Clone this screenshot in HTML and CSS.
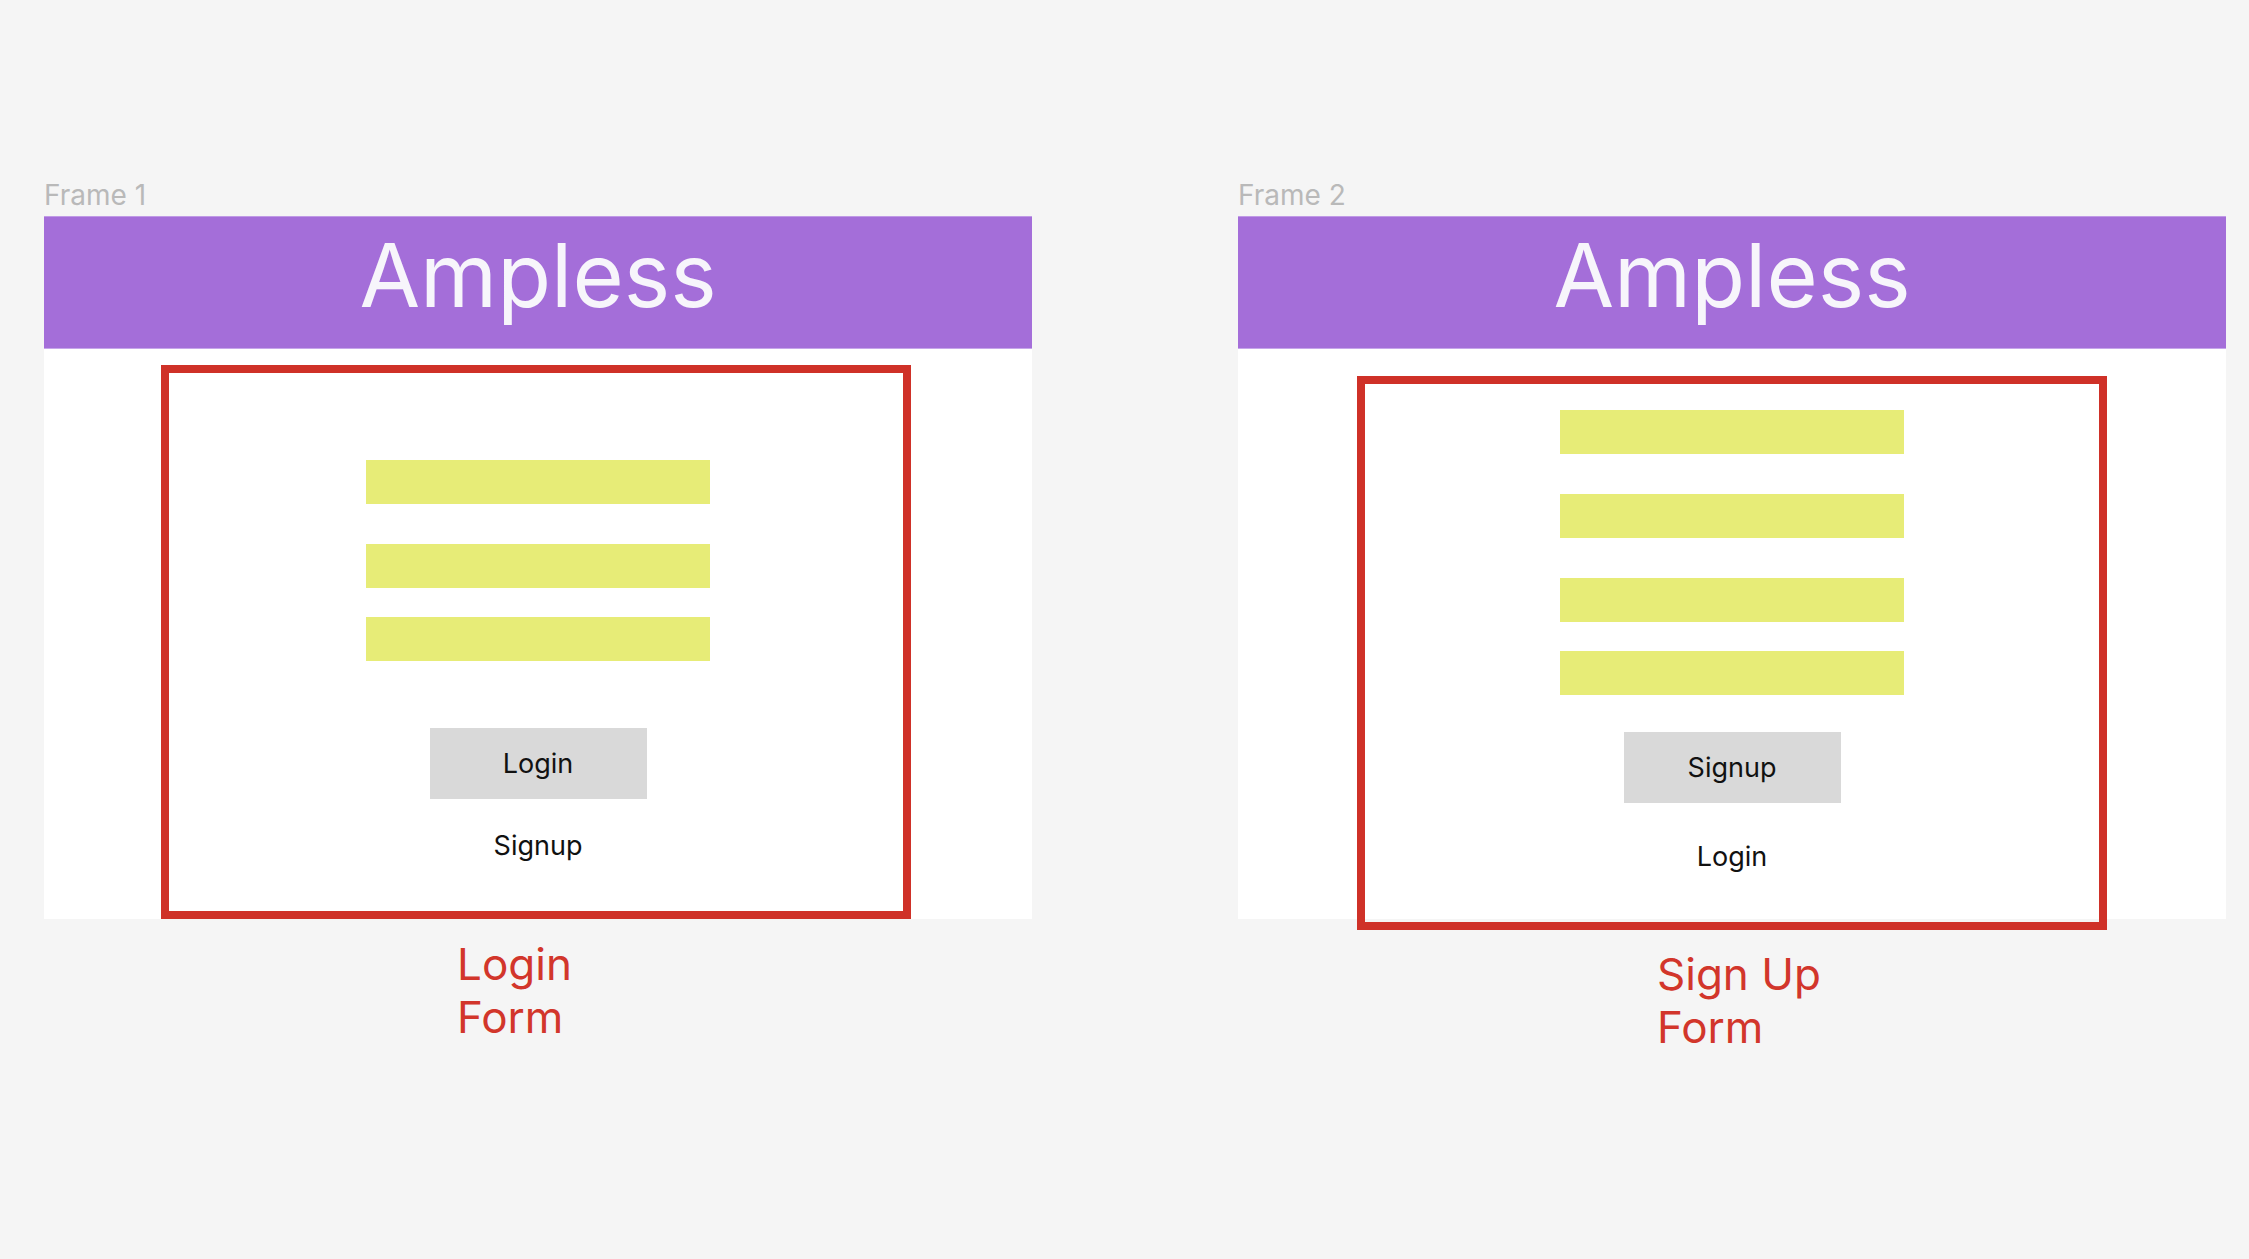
FILE: index.html
```html
<!DOCTYPE html>
<html lang="en">
<head>
<meta charset="utf-8">
<title>Ampless wireframes</title>
<link rel="stylesheet" href="styles.css">
</head>
<body>
<main class="canvas">
  <section class="board board-login">
    <div class="frame-name">Frame 1</div>
    <div class="frame">
      <header class="frame-header">Ampless</header>
      <div class="frame-body">
        <div class="callout callout-login">
          <div class="field"></div>
          <div class="field field-gap"></div>
          <div class="field field-gap-sm"></div>
          <div class="btn btn-login">Login</div>
          <div class="link link-login">Signup</div>
        </div>
      </div>
    </div>
    <div class="note note-login">Login<br>Form</div>
  </section>

  <section class="board board-signup">
    <div class="frame-name">Frame 2</div>
    <div class="frame">
      <header class="frame-header">Ampless</header>
      <div class="frame-body">
        <div class="callout callout-signup">
          <div class="field"></div>
          <div class="field field-gap"></div>
          <div class="field field-gap"></div>
          <div class="field field-gap-sm"></div>
          <div class="btn btn-signup">Signup</div>
          <div class="link link-signup">Login</div>
        </div>
      </div>
    </div>
    <div class="note note-signup">Sign Up<br>Form</div>
  </section>
</main>
</body>
</html>
```

FILE: styles.css
```css
html, body {
  margin: 0;
  padding: 0;
  background: #f5f5f5;
}

body {
  width: 2249px;
  height: 1259px;
  overflow: hidden;
  font-family: Inter, "Noto Sans", "Liberation Sans", sans-serif;
}

.canvas {
  display: flex;
  align-items: flex-start;
  gap: 206px;
  padding: 178px 0 0 44px;
}

.board {
  display: flex;
  flex-direction: column;
  width: 988px;
}

.frame-name {
  font-size: 28px;
  line-height: 34px;
  color: #b9b9b9;
  margin-bottom: 4px;
}

.frame {
  display: flex;
  flex-direction: column;
}

.frame-header {
  box-sizing: border-box;
  height: 133px;
  padding-top: 6px;
  background: #a46ed9;
  border-top: 1px solid #c09ae6;
  border-bottom: 1px solid #c6a6ea;
  color: #f7f5fb;
  font-size: 88px;
  line-height: 104px;
  text-align: center;
}

.frame-body {
  height: 570px;
  background: #ffffff;
  display: flex;
  flex-direction: column;
}

.callout {
  box-sizing: border-box;
  width: 750px;
  height: 554px;
  border: 8px solid #cf3128;
  display: flex;
  flex-direction: column;
  align-items: center;
  flex-shrink: 0;
}

.callout-login {
  margin: 16px 0 0 117px;
  padding: 87px 0 0 4px;
}

.callout-signup {
  margin: 27px 0 0 119px;
  padding: 26px 0 0 0;
}

.field {
  width: 344px;
  height: 44px;
  background: #e7ec77;
  flex-shrink: 0;
}

.field-gap {
  margin-top: 40px;
}

.field-gap-sm {
  margin-top: 29px;
}

.btn {
  width: 217px;
  height: 71px;
  background: #d9d9d9;
  color: #111111;
  font-size: 27px;
  line-height: 71px;
  text-align: center;
  flex-shrink: 0;
}

.btn-login {
  margin-top: 67px;
}

.btn-signup {
  margin-top: 37px;
}

.link {
  font-size: 27px;
  line-height: 33px;
  color: #111111;
  text-align: center;
}

.link-login {
  margin-top: 30px;
}

.link-signup {
  margin-top: 37px;
}

.note {
  font-size: 44px;
  line-height: 53px;
  color: #d2362b;
}

.note-login {
  margin: 19px 0 0 413px;
}

.note-signup {
  margin: 29px 0 0 419px;
}
```
